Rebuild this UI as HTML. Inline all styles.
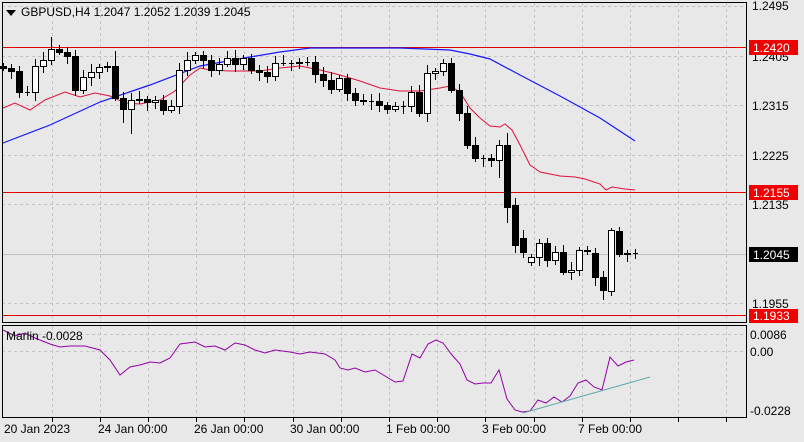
<!DOCTYPE html><html><head><style>
body{margin:0;background:#e8e8e8;width:804px;height:442px;overflow:hidden;font-family:"Liberation Sans",sans-serif}
</style></head><body>
<svg id="s" width="804" height="442" xmlns="http://www.w3.org/2000/svg" style="position:absolute;left:0;top:0;font-family:'Liberation Sans',sans-serif;font-size:12px">
<rect width="804" height="442" fill="#e8e8e8"/>
<g id="grid" stroke="#c4c4c4" stroke-dasharray="3,3" stroke-width="1"></g>
<line x1="2" y1="47.5" x2="747" y2="47.5" stroke="#e00000"/>
<line x1="2" y1="192.5" x2="747" y2="192.5" stroke="#e00000"/>
<line x1="2" y1="315.5" x2="747" y2="315.5" stroke="#e00000"/>
<line x1="2" y1="254.5" x2="747" y2="254.5" stroke="#c0c0c0"/>
<polyline fill="none" stroke="#1818ff" stroke-width="1.2" points="3,143 50,125 100,102 150,85 200,66 250,57 280,52 310,48 340,48 370,48 400,48 450,50 470,54 490,59 520,75 560,96 600,118 635,141"/>
<polyline fill="none" stroke="#e0103c" stroke-width="1" points="3,108 15,103 30,110 45,100 65,92 80,97 95,93 110,96 125,103 140,104 160,100 175,91 190,75 200,68 210,70 230,71 260,71 280,68 300,66 320,70 340,75 360,81 380,88 400,91 420,91 440,88 450,86 460,92 470,108 480,118 490,126 500,127 505,124 512,130 520,145 530,165 540,172 560,176 575,177 585,179 600,184 606,190 612,187 625,189 635,190"/>
<g id="cg"></g>
<polyline fill="none" stroke="#9400a8" stroke-width="1" points="3,330 15,336 25,333 35,338 50,344 60,347 70,346 85,346 100,350 110,360 120,375 130,367 140,365 150,362 160,363 170,358 180,344 195,342 205,347 215,346 225,350 235,343 245,345 255,350 265,353 275,350 290,352 300,354 310,352 325,354 335,360 340,368 348,370 355,368 365,372 375,370 385,376 395,382 403,381 412,354 420,358 428,344 436,340 443,343 452,355 460,364 467,380 475,384 483,383 491,383 499,370 507,399 515,410 522,412 530,411 538,400 546,403 554,397 562,402 570,396 578,383 586,380 594,387 602,390 610,357 618,366 626,362 634,360"/>
<line x1="523" y1="413" x2="650" y2="377" stroke="#5fa8a8" stroke-width="1"/>
<rect x="2.5" y="2.5" width="744" height="320" fill="none" stroke="#000"/>
<rect x="2.5" y="325.5" width="744" height="92" fill="none" stroke="#000"/>
<g id="ticks" stroke="#000"></g>
<g font-size="12" fill="#000">
<path d="M6,10 h10 l-5,6z" fill="#000"/>
<text x="21" y="16">GBPUSD,H4  1.2047 1.2052 1.2039 1.2045</text>
<text x="6" y="340">Marlin -0.0028</text>
<text x="752" y="10">1.2495</text><text x="752" y="61">1.2405</text><text x="752" y="110">1.2315</text>
<text x="752" y="160">1.2225</text><text x="752" y="209">1.2135</text><text x="752" y="308">1.1955</text>
<text x="750" y="339">0.0086</text><text x="750" y="356">0.00</text><text x="750" y="415">-0.0228</text>
<text x="4" y="433">20 Jan 2023</text><text x="98" y="433">24 Jan 00:00</text><text x="194" y="433">26 Jan 00:00</text>
<text x="290" y="433">30 Jan 00:00</text><text x="386" y="433">1 Feb 00:00</text><text x="482" y="433">3 Feb 00:00</text><text x="578" y="433">7 Feb 00:00</text>
</g>
<rect x="749" y="40" width="49" height="15" fill="#f00000"/><text x="753" y="52" fill="#fff">1.2420</text>
<rect x="749" y="185" width="49" height="15" fill="#f00000"/><text x="753" y="197" fill="#fff">1.2155</text>
<rect x="749" y="247" width="49" height="15" fill="#000"/><text x="753" y="259" fill="#fff">1.2045</text>
<rect x="749" y="309" width="49" height="14" fill="#f00000"/><text x="753" y="320" fill="#fff">1.1933</text>
</svg>
<script>
(function(){
var ns="http://www.w3.org/2000/svg",g=document.getElementById('grid'),cg=document.getElementById('cg'),tk=document.getElementById('ticks');
function el(p,t,a){var e=document.createElementNS(ns,t);for(var k in a)e.setAttribute(k,a[k]);p.appendChild(e);return e;}
[6,56,105,155,204,303,334,351].forEach(function(y){el(g,'line',{x1:2,y1:y+.5,x2:747,y2:y+.5});});
for(var gx=51.5;gx<747;gx+=48.2){var xx=Math.round(gx)+.5;el(g,'line',{x1:xx,y1:3,x2:xx,y2:322});el(g,'line',{x1:xx,y1:326,x2:xx,y2:417});el(tk,'line',{x1:xx,y1:418,x2:xx,y2:422});}
var cl=[68,71,92,92,66,60,49,52,56,90,77,72,67,66,98,109,100,99,102,100,110,106,70,60,55,60,70,64,58,64,58,70,72,76,63,63,63,62,62,74,80,89,78,93,100,101,101,105,109,106,106,92,113,73,71,63,90,113,145,158,158,160,145,207,245,252,257,243,260,252,272,270,250,251,277,290,230,254,253,253];
for(var i=0;i<cl.length;i++){var cx=3+8*i,cc=cl[i],op=(i==0?66:cl[i-1]);
 if(i==63)op=145;if(i==64)op=205;if(i==65)op=238;if(i==66)op=262;if(i==74)op=253;if(i==76)op=291;if(i==77)op=231;
 var bt=Math.min(op,cc),bb=Math.max(op,cc),hi=bt-3-((i*7)%6),lo=bb+3+((i*5)%7);
 if(i==6)hi=37;if(i==14)hi=51;if(i==15)lo=123;if(i==16)lo=134;if(i==58)lo=149;if(i==62){hi=140;lo=178;}if(i==63){hi=133;lo=223;}if(i==75)lo=300;if(i==76)hi=228;if(i==77)hi=227;
 el(cg,'line',{x1:cx+.5,y1:hi,x2:cx+.5,y2:lo,stroke:'#000'});
 if(bb-bt<1){el(cg,'line',{x1:cx-2,y1:bt+.5,x2:cx+3,y2:bt+.5,stroke:'#000'});}
 else el(cg,'rect',{x:cx-2.5,y:bt+.5,width:6,height:bb-bt,fill:cc<op?'#fff':'#000',stroke:'#000'});
}
})();
</script>
</body></html>
